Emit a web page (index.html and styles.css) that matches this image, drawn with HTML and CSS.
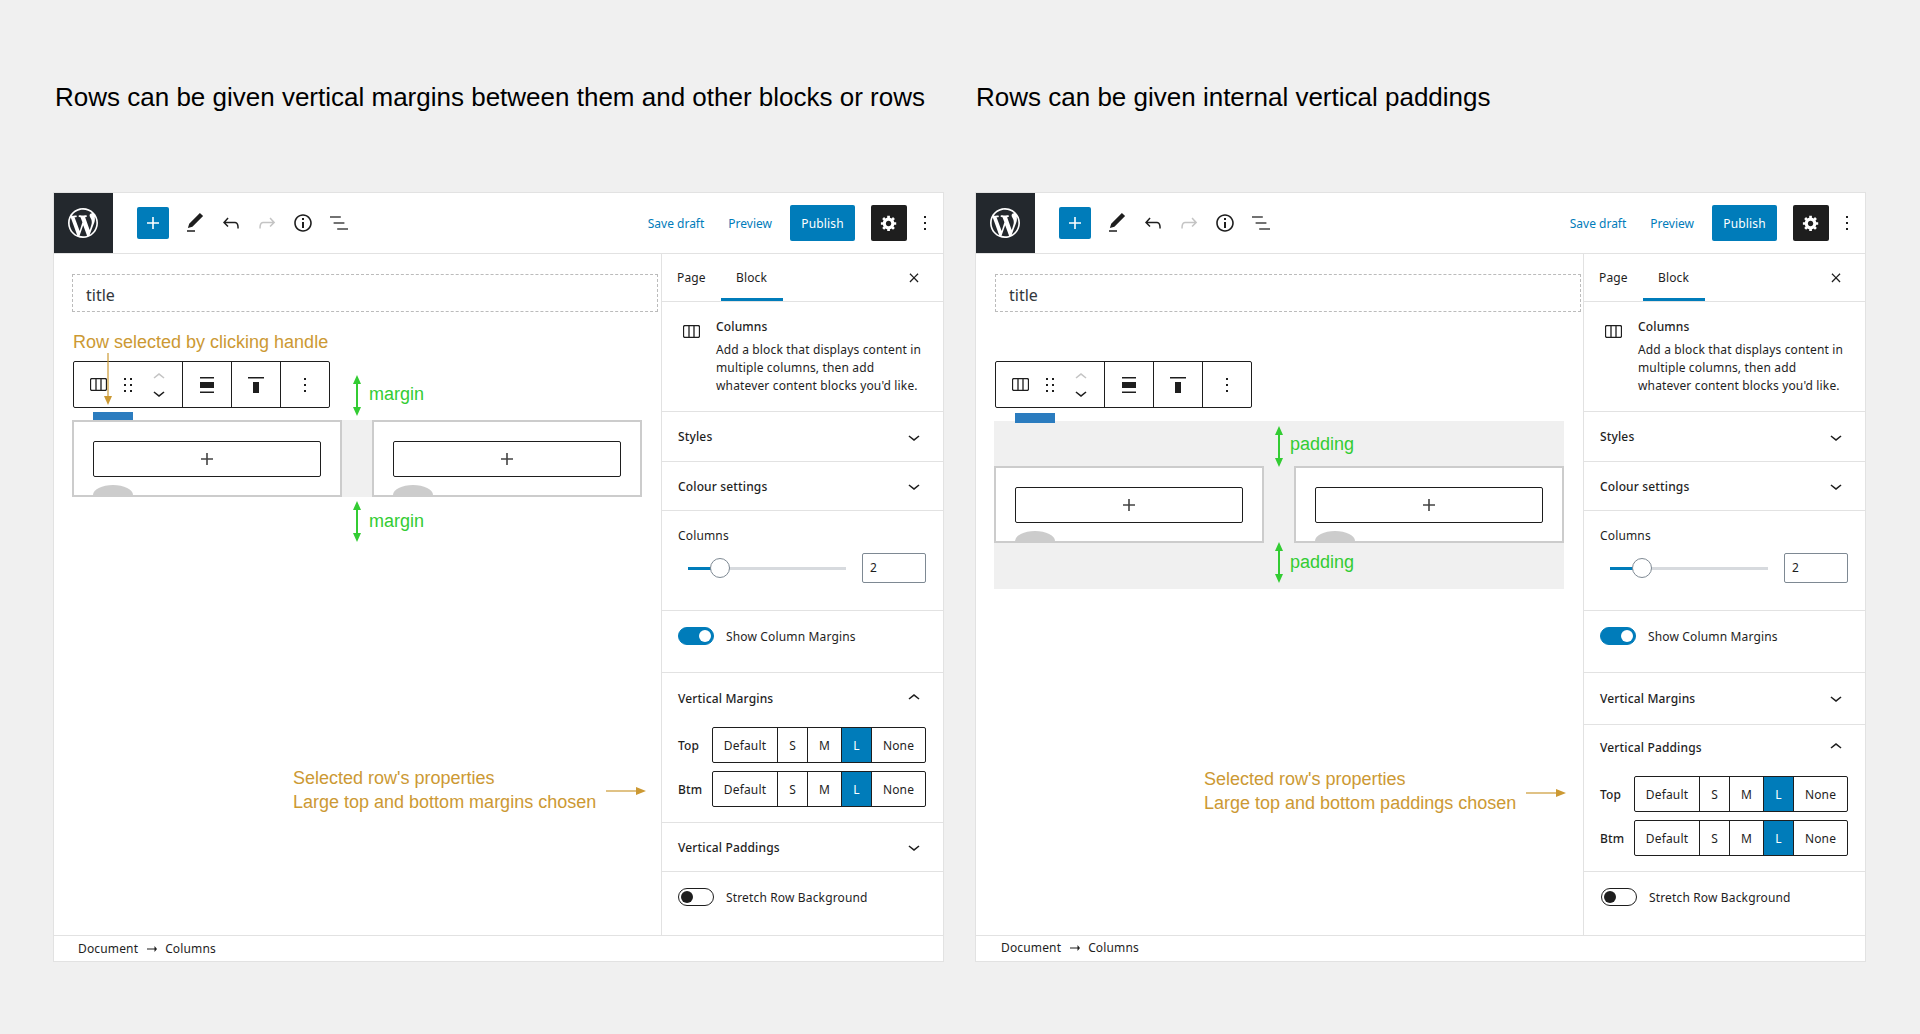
FILE: index.html
```html
<!DOCTYPE html>
<html lang="en">
<head>
    <meta charset="UTF-8">
    <meta name="viewport" content="width=device-width, initial-scale=1.0">
    <title>Row margins and paddings</title>
    <link rel="stylesheet" href="styles.css">
</head>
<body>
    <svg class="sprite" xmlns="http://www.w3.org/2000/svg">
        <symbol id="i-wp" viewBox="-2 -2 24 24"><path d="M20 10c0-5.51-4.49-10-10-10C4.48 0 0 4.49 0 10c0 5.52 4.48 10 10 10 5.51 0 10-4.48 10-10zM7.78 15.37L4.37 6.22c.55-.02 1.17-.08 1.17-.08.5-.06.44-1.13-.06-1.11 0 0-1.45.11-2.37.11-.18 0-.37 0-.58-.01C4.12 2.69 6.87 1.11 10 1.11c2.33 0 4.45.87 6.05 2.34-.68-.11-1.65.39-1.65 1.58 0 .74.45 1.36.9 2.1.35.61.55 1.36.55 2.46 0 1.49-1.4 5-1.4 5l-3.03-8.37c.54-.02.82-.17.82-.17.5-.05.44-1.25-.06-1.22 0 0-1.44.12-2.38.12-.87 0-2.33-.12-2.33-.12-.5-.03-.56 1.2-.06 1.22l.92.08 1.26 3.41zM17.41 10c.24-.64.74-1.87.43-4.25.7 1.29 1.05 2.71 1.05 4.25 0 3.29-1.73 6.24-4.4 7.78.97-2.59 1.94-5.2 2.92-7.78zM6.1 18.09C3.12 16.65 1.11 13.53 1.11 10c0-1.3.23-2.48.72-3.59C3.25 10.3 4.67 14.2 6.1 18.09zm4.03-6.63l2.58 6.98c-.86.29-1.76.45-2.71.45-.79 0-1.57-.11-2.29-.33.81-2.38 1.62-4.74 2.42-7.1z"/></symbol>
        <symbol id="i-plus" viewBox="0 0 24 24"><path d="M18 11.2h-5.2V6h-1.6v5.2H6v1.6h5.2V18h1.6v-5.2H18z"/></symbol>
        <symbol id="i-pen" viewBox="0 0 24 24"><path d="M20.1 5.1L16.9 2 6.2 12.7l-1.3 4.4 4.5-1.3L20.1 5.1zM4 20.8h8v-1.5H4v1.5z"/></symbol>
        <symbol id="i-undo" viewBox="0 0 24 24"><path d="M18.3 11.7c-.6-.6-1.4-.9-2.3-.9H6.7l2.9-3.3-1.1-1-4.5 5L8.5 16l1-1-2.7-2.7H16c.5 0 .9.2 1.3.5 1 1 1 3.4 1 4.5v.3h1.5v-.2c0-1.5 0-4.3-1.5-5.7z"/></symbol>
        <symbol id="i-redo" viewBox="0 0 24 24"><path d="M15.6 6.5l-1.1 1 2.9 3.3H8c-.9 0-1.7.3-2.3.9-1.4 1.5-1.4 4.2-1.4 5.6v.2h1.5v-.3c0-1.1 0-3.5 1-4.5.3-.3.7-.5 1.3-.5h9.2L14.5 15l1.1 1.1 4.6-4.6-4.6-5z"/></symbol>
        <symbol id="i-info" viewBox="0 0 24 24"><path d="M12 3.2c-4.8 0-8.8 3.9-8.8 8.8 0 4.8 3.9 8.8 8.8 8.8 4.8 0 8.8-3.9 8.8-8.8 0-4.8-4-8.8-8.8-8.8zm0 16c-4 0-7.2-3.3-7.2-7.2C4.8 8 8 4.8 12 4.8s7.2 3.3 7.2 7.2c0 4-3.2 7.2-7.2 7.2zM11 17h2v-6h-2v6zm0-8h2V7h-2v2z"/></symbol>
        <symbol id="i-list" viewBox="0 0 24 24"><path d="M13.8 5.2H3v1.5h10.8V5.2zm-3.6 12v1.5H21v-1.5H10.2zm7.2-6H6.6v1.5h10.8v-1.5z"/></symbol>
        <symbol id="i-gear" viewBox="0 0 20 20"><path d="M18 12h-2.18c-.17.7-.44 1.35-.81 1.93l1.54 1.54-2.1 2.1-1.54-1.54c-.58.36-1.23.63-1.91.79V19H8v-2.18c-.68-.16-1.33-.43-1.91-.79l-1.54 1.54-2.12-2.12 1.54-1.54c-.36-.58-.63-1.23-.79-1.91H1V9.03h2.17c.16-.7.44-1.35.8-1.94L2.43 5.55l2.1-2.1 1.54 1.54c.58-.37 1.24-.64 1.93-.81V2h3v2.18c.68.16 1.33.43 1.91.79l1.54-1.54 2.12 2.12-1.54 1.54c.36.59.64 1.24.8 1.94H18V12zm-8.5 1.5c1.66 0 3-1.34 3-3s-1.34-3-3-3-3 1.34-3 3 1.34 3 3 3z"/></symbol>
        <symbol id="i-more" viewBox="0 0 24 24"><path d="M13 19h-2v-2h2v2zm0-6h-2v-2h2v2zm0-6h-2V5h2v2z"/></symbol>
        <symbol id="i-close" viewBox="0 0 24 24"><path d="M13 11.800l4.400-4.400-1.100-1.100-4.300 4.400-4.300-4.400-1.100 1.100 4.400 4.400-4.400 4.400 1.100 1.100 4.300-4.400 4.300 4.400 1.100-1.100z"/></symbol>
        <symbol id="i-down" viewBox="0 0 24 24"><path d="M17.5 11.6L12 16l-5.5-4.4.9-1.2L12 14l4.5-3.6 1 1.2z"/></symbol>
        <symbol id="i-up" viewBox="0 0 24 24"><path d="M6.5 12.4L12 8l5.5 4.4-.9 1.2L12 10l-4.5 3.6-1-1.2z"/></symbol>
        <symbol id="i-cols" viewBox="0 0 17 13"><path d="M2 .5h13A1.5 1.5 0 0 1 16.500 2v9a1.500 1.500 0 0 1-1.500 1.500H2A1.500 1.500 0 0 1 .5 11V2A1.500 1.500 0 0 1 2 .5zM6 .5v12M11 .5v12" fill="none" stroke="currentColor" stroke-width="1.300"/></symbol>
        <symbol id="i-drag" viewBox="0 0 8 14"><path d="M0 0h2v2H0zM6 0h2v2H6zM0 6h2v2H0zM6 6h2v2H6zM0 12h2v2H0zM6 12h2v2H6z"/></symbol>
        <symbol id="i-wide" viewBox="0 0 14 16"><path d="M0 0h14v1.500H0zM0 5h14v6H0zM0 14.500h14V16H0z"/></symbol>
        <symbol id="i-top" viewBox="0 0 16 16"><path d="M0 0h16v1.500H0zM5 5h6v11H5z"/></symbol>
        <symbol id="i-arrow" viewBox="0 0 10 6"><path d="M0 2.500h7.500V0L10 3 7.500 6V3.500H0z"/></symbol>
        <symbol id="a-green" viewBox="0 0 8 41"><path d="M4 0l4 9H5v23h3l-4 9-4-9h3V9H0z"/></symbol>
        <symbol id="a-down" viewBox="0 0 8 52"><path d="M3 0h2v44H3z" opacity=".6"/><path d="M0 43h8l-4 9z"/></symbol>
        <symbol id="a-right" viewBox="0 0 40 8"><path d="M0 3h31v2H0z" opacity=".6"/><path d="M30 0v8l10-4z"/></symbol>
    </svg>

    <div class="page">
        <section class="panel">
            <h2 class="panel-title title-margins">Rows can be given vertical margins between them and other blocks or rows</h2>
            <div class="editor">
                <header class="topbar">
                    <div class="logo"><svg class="logo-icon"><use href="#i-wp"/></svg></div>
                    <button class="add-btn"><svg class="icon"><use href="#i-plus"/></svg></button>
                    <span class="tool first"><svg class="icon"><use href="#i-pen"/></svg></span>
                    <span class="tool"><svg class="icon"><use href="#i-undo"/></svg></span>
                    <span class="tool muted"><svg class="icon"><use href="#i-redo"/></svg></span>
                    <span class="tool"><svg class="icon"><use href="#i-info"/></svg></span>
                    <span class="tool dim"><svg class="icon"><use href="#i-list"/></svg></span>
                    <div class="actions">
                        <a class="link save">Save draft</a>
                        <a class="link preview">Preview</a>
                        <button class="publish">Publish</button>
                        <button class="gear"><svg class="gear-icon"><use href="#i-gear"/></svg></button>
                        <span class="more"><svg class="icon"><use href="#i-more"/></svg></span>
                    </div>
                </header>
                <div class="main">
                    <div class="canvas">
                        <div class="title-box">title</div>
                        <div class="toolbar">
                            <div class="tb-group tb-first">
                                <svg class="tb-cols"><use href="#i-cols"/></svg>
                                <svg class="tb-drag"><use href="#i-drag"/></svg>
                                <div class="tb-mover">
                                    <svg class="tb-chev muted"><use href="#i-up"/></svg>
                                    <svg class="tb-chev"><use href="#i-down"/></svg>
                                </div>
                            </div>
                            <div class="tb-group"><svg class="tb-wide"><use href="#i-wide"/></svg></div>
                            <div class="tb-group"><svg class="tb-top"><use href="#i-top"/></svg></div>
                            <div class="tb-group"><svg class="icon"><use href="#i-more"/></svg></div>
                        </div>
                        <div class="row">
                            <span class="handle"></span>
                            <div class="col"><div class="appender"><svg class="plus"><use href="#i-plus"/></svg></div><span class="col-tab"></span></div>
                            <div class="col"><div class="appender"><svg class="plus"><use href="#i-plus"/></svg></div><span class="col-tab"></span></div>
                        </div>

                        <span class="note note-row">Row selected by clicking handle</span>
                        <svg class="arrow-down"><use href="#a-down"/></svg>
                        <svg class="arrow-green am-top"><use href="#a-green"/></svg>
                        <span class="green-text tm-top">margin</span>
                        <svg class="arrow-green am-btm"><use href="#a-green"/></svg>
                        <span class="green-text tm-btm">margin</span>
                        <span class="note note-props">Selected row's properties<br>Large top and bottom margins chosen</span>
                        <svg class="arrow-right ar-left"><use href="#a-right"/></svg>
                    </div>
                    <aside class="sidebar">
                        <div class="tabs">
                            <span class="tab tab-page">Page</span>
                            <span class="tab tab-block">Block</span>
                            <svg class="close"><use href="#i-close"/></svg>
                        </div>
                        <div class="section s-desc">
                            <svg class="desc-icon"><use href="#i-cols"/></svg>
                            <div>
                                <div class="desc-title">Columns</div>
                                <p class="desc-text">Add a block that displays content in multiple columns, then add whatever content blocks you'd like.</p>
                            </div>
                        </div>
                        <div class="section s-styles"><div class="head"><span>Styles</span><svg class="icon"><use href="#i-down"/></svg></div></div>
                        <div class="section s-colour"><div class="head h-48"><span>Colour settings</span><svg class="icon"><use href="#i-down"/></svg></div></div>
                        <div class="section s-columns">
                            <div class="field-label">Columns</div>
                            <div class="range-row">
                                <div class="slider"><span class="slider-fill"></span><span class="slider-knob"></span></div>
                                <div class="num-input">2</div>
                            </div>
                        </div>
                        <div class="section s-toggle">
                            <div class="toggle-row"><span class="toggle on"></span><span>Show Column Margins</span></div>
                        </div>
                        <div class="section s-open-m">
                            <div class="head h-50"><span>Vertical Margins</span><svg class="icon"><use href="#i-up"/></svg></div>
                            <div class="seg-row seg-m">
                                <span class="seg-label">Top</span>
                                <div class="seg"><span class="c-def">Default</span><span class="c-s">S</span><span class="c-m">M</span><span class="c-l on">L</span><span class="c-none">None</span></div>
                            </div>
                            <div class="seg-row seg-next">
                                <span class="seg-label">Btm</span>
                                <div class="seg"><span class="c-def">Default</span><span class="c-s">S</span><span class="c-m">M</span><span class="c-l on">L</span><span class="c-none">None</span></div>
                            </div>
                        </div>
                        <div class="section s-closed-p"><div class="head h-48"><span>Vertical Paddings</span><svg class="icon"><use href="#i-down"/></svg></div></div>
                        <div class="section-last">
                            <div class="toggle-row"><span class="toggle"></span><span>Stretch Row Background</span></div>
                        </div>
                    </aside>
                </div>
                <footer class="status"><span>Document</span><svg class="status-arrow"><use href="#i-arrow"/></svg><span>Columns</span></footer>
            </div>
        </section>

        <section class="panel panel-paddings">
            <h2 class="panel-title title-paddings">Rows can be given internal vertical paddings</h2>
            <div class="editor">
                <header class="topbar">
                    <div class="logo"><svg class="logo-icon"><use href="#i-wp"/></svg></div>
                    <button class="add-btn"><svg class="icon"><use href="#i-plus"/></svg></button>
                    <span class="tool first"><svg class="icon"><use href="#i-pen"/></svg></span>
                    <span class="tool"><svg class="icon"><use href="#i-undo"/></svg></span>
                    <span class="tool muted"><svg class="icon"><use href="#i-redo"/></svg></span>
                    <span class="tool"><svg class="icon"><use href="#i-info"/></svg></span>
                    <span class="tool dim"><svg class="icon"><use href="#i-list"/></svg></span>
                    <div class="actions">
                        <a class="link save">Save draft</a>
                        <a class="link preview">Preview</a>
                        <button class="publish">Publish</button>
                        <button class="gear"><svg class="gear-icon"><use href="#i-gear"/></svg></button>
                        <span class="more"><svg class="icon"><use href="#i-more"/></svg></span>
                    </div>
                </header>
                <div class="main">
                    <div class="canvas">
                        <div class="title-box">title</div>
                        <div class="toolbar">
                            <div class="tb-group tb-first">
                                <svg class="tb-cols"><use href="#i-cols"/></svg>
                                <svg class="tb-drag"><use href="#i-drag"/></svg>
                                <div class="tb-mover">
                                    <svg class="tb-chev muted"><use href="#i-up"/></svg>
                                    <svg class="tb-chev"><use href="#i-down"/></svg>
                                </div>
                            </div>
                            <div class="tb-group"><svg class="tb-wide"><use href="#i-wide"/></svg></div>
                            <div class="tb-group"><svg class="tb-top"><use href="#i-top"/></svg></div>
                            <div class="tb-group"><svg class="icon"><use href="#i-more"/></svg></div>
                        </div>
                        <div class="row row-padded">
                            <span class="handle"></span>
                            <div class="col"><div class="appender"><svg class="plus"><use href="#i-plus"/></svg></div><span class="col-tab"></span></div>
                            <div class="col"><div class="appender"><svg class="plus"><use href="#i-plus"/></svg></div><span class="col-tab"></span></div>
                        </div>

                        <svg class="arrow-green ap-top"><use href="#a-green"/></svg>
                        <span class="green-text tp-top">padding</span>
                        <svg class="arrow-green ap-btm"><use href="#a-green"/></svg>
                        <span class="green-text tp-btm">padding</span>
                        <span class="note note-props-r">Selected row's properties<br>Large top and bottom paddings chosen</span>
                        <svg class="arrow-right ar-right"><use href="#a-right"/></svg>
                    </div>
                    <aside class="sidebar">
                        <div class="tabs">
                            <span class="tab tab-page">Page</span>
                            <span class="tab tab-block">Block</span>
                            <svg class="close"><use href="#i-close"/></svg>
                        </div>
                        <div class="section s-desc">
                            <svg class="desc-icon"><use href="#i-cols"/></svg>
                            <div>
                                <div class="desc-title">Columns</div>
                                <p class="desc-text">Add a block that displays content in multiple columns, then add whatever content blocks you'd like.</p>
                            </div>
                        </div>
                        <div class="section s-styles"><div class="head"><span>Styles</span><svg class="icon"><use href="#i-down"/></svg></div></div>
                        <div class="section s-colour"><div class="head h-48"><span>Colour settings</span><svg class="icon"><use href="#i-down"/></svg></div></div>
                        <div class="section s-columns">
                            <div class="field-label">Columns</div>
                            <div class="range-row">
                                <div class="slider"><span class="slider-fill"></span><span class="slider-knob"></span></div>
                                <div class="num-input">2</div>
                            </div>
                        </div>
                        <div class="section s-toggle">
                            <div class="toggle-row"><span class="toggle on"></span><span>Show Column Margins</span></div>
                        </div>
                        <div class="section s-closed-m"><div class="head h-50"><span>Vertical Margins</span><svg class="icon"><use href="#i-down"/></svg></div></div>
                        <div class="section s-open-p">
                            <div class="head h-44"><span>Vertical Paddings</span><svg class="icon"><use href="#i-up"/></svg></div>
                            <div class="seg-row seg-p">
                                <span class="seg-label">Top</span>
                                <div class="seg"><span class="c-def">Default</span><span class="c-s">S</span><span class="c-m">M</span><span class="c-l on">L</span><span class="c-none">None</span></div>
                            </div>
                            <div class="seg-row seg-next">
                                <span class="seg-label">Btm</span>
                                <div class="seg"><span class="c-def">Default</span><span class="c-s">S</span><span class="c-m">M</span><span class="c-l on">L</span><span class="c-none">None</span></div>
                            </div>
                        </div>
                        <div class="section-last last-shifted">
                            <div class="toggle-row"><span class="toggle"></span><span>Stretch Row Background</span></div>
                        </div>
                    </aside>
                </div>
                <footer class="status status-up"><span>Document</span><svg class="status-arrow"><use href="#i-arrow"/></svg><span>Columns</span></footer>
            </div>
        </section>
    </div>
</body>
</html>
```

FILE: styles.css
```css
* {
    box-sizing: border-box;
}
body {
    margin: 0;
    background-color: #f0f0f0;
    color: #1e1e1e;
    font-family: "Noto Sans", sans-serif;
    font-size: 12px;
    letter-spacing: 0.15px;
}
.sprite {
    display: none;
}
.page {
    display: flex;
    gap: 31px;
    padding: 82px 0 0 53px;
}
.panel {
    width: 891px;
}
.panel-title {
    height: 30px;
    margin: 0 0 80px;
    font-family: "Liberation Sans", Arial, sans-serif;
    font-size: 26px;
    font-weight: normal;
    line-height: 30px;
    letter-spacing: normal;
    color: #000;
    white-space: nowrap;
}
.title-margins {
    padding-left: 2px;
}
.title-paddings {
    padding-left: 1px;
}

/* editor window */
.editor {
    display: flex;
    flex-direction: column;
    height: 770px;
    background-color: #fff;
    border: 1px solid #e2e2e2;
}
.icon {
    display: block;
    width: 24px;
    height: 24px;
    flex: none;
    fill: currentColor;
}
.topbar {
    display: flex;
    align-items: center;
    flex: none;
    height: 61px;
    border-bottom: 1px solid #e2e2e2;
}
.logo {
    display: flex;
    align-items: center;
    justify-content: center;
    width: 59px;
    height: 60px;
    padding-right: 1px;
    background-color: #23282d;
}
.logo-icon {
    width: 36px;
    height: 36px;
    fill: #fff;
}
.add-btn {
    display: flex;
    align-items: center;
    justify-content: center;
    width: 32px;
    height: 32px;
    margin-left: 24px;
    padding: 0;
    background-color: #007cba;
    border: none;
    border-radius: 2px;
    color: #fff;
}
.tool {
    display: flex;
    justify-content: center;
    width: 36px;
}
.tool.first {
    margin-left: 8px;
}
.muted {
    color: #c4c4c4;
}
.dim {
    color: #444;
}
.actions {
    display: flex;
    align-items: center;
    margin-left: auto;
    padding-right: 6px;
}
.link {
    color: #007cba;
    letter-spacing: normal;
}
.save {
    margin-right: 24px;
}
.preview {
    margin-right: 18px;
}
.publish {
    width: 65px;
    height: 36px;
    padding: 0;
    background-color: #007cba;
    border: none;
    border-radius: 2px;
    color: #fff;
    font-family: inherit;
    font-size: 12px;
    letter-spacing: inherit;
}
.gear {
    display: flex;
    align-items: center;
    justify-content: center;
    width: 36px;
    height: 36px;
    margin-left: 16px;
    padding: 0;
    background-color: #1e1e1e;
    border: none;
    border-radius: 2px;
}
.gear-icon {
    width: 18px;
    height: 18px;
    fill: #fff;
}
.more {
    margin-left: 6px;
}
.main {
    display: flex;
    flex: 1;
    min-height: 0;
}

/* canvas */
.canvas {
    position: relative;
    flex: 1;
    padding: 20px 0 0 18px;
}
.title-box {
    width: 586px;
    height: 38px;
    padding-left: 13px;
    border: 1px dashed #bbb;
    font-size: 16px;
    line-height: 40px;
    letter-spacing: normal;
    color: #32373c;
}
.panel-paddings .title-box {
    margin-left: 1px;
}
.toolbar {
    display: flex;
    width: 257px;
    height: 47px;
    margin: 49px 0 0 1px;
    background-color: #fff;
    border: 1px solid #1e1e1e;
    border-radius: 2px;
}
.tb-group {
    display: flex;
    align-items: center;
    justify-content: center;
    width: 49px;
    border-left: 1px solid #1e1e1e;
}
.tb-first {
    justify-content: flex-start;
    width: 108px;
    padding-left: 16px;
    border-left: none;
}
.tb-cols {
    width: 17px;
    height: 13px;
    flex: none;
}
.tb-drag {
    width: 8px;
    height: 14px;
    flex: none;
    margin-left: 17px;
    fill: #1e1e1e;
}
.tb-mover {
    display: flex;
    flex-direction: column;
    flex: none;
    width: 24px;
    margin-left: 15px;
}
.tb-chev {
    display: block;
    width: 24px;
    height: 24px;
    fill: currentColor;
}
.tb-chev.muted {
    margin-bottom: -8px;
}
.tb-wide {
    width: 14px;
    height: 16px;
    fill: #1e1e1e;
}
.tb-top {
    width: 16px;
    height: 16px;
    fill: #1e1e1e;
}
.row {
    position: relative;
    display: flex;
    gap: 30px;
    width: 570px;
    margin-top: 12px;
    background-color: #f0f0f0;
}
.row-padded {
    margin-top: 13px;
    padding: 45px 0 46px;
}
.handle {
    position: absolute;
    left: 21px;
    top: -8px;
    width: 40px;
    height: 10px;
    background-color: #2b7cbf;
}
.col {
    position: relative;
    width: 270px;
    height: 77px;
    padding: 19px;
    background-color: #fff;
    border: 2px solid #ccc;
}
.appender {
    display: flex;
    align-items: center;
    justify-content: center;
    height: 36px;
    border: 1px solid #1e1e1e;
    border-radius: 2px;
}
.plus {
    width: 24px;
    height: 24px;
    fill: #444;
}
.col-tab {
    position: absolute;
    left: 19px;
    bottom: 0;
    width: 40px;
    height: 10px;
    background-color: #ccc;
    border-radius: 50% 50% 0 0 / 100% 100% 0 0;
}

/* annotations on top of the canvas */
.note,
.green-text {
    position: absolute;
    font-family: "Liberation Sans", Arial, sans-serif;
    font-size: 18px;
    line-height: 24px;
    letter-spacing: normal;
    white-space: nowrap;
}
.note {
    color: #cc9933;
}
.green-text {
    color: #33cc33;
}
.note-row {
    left: 19px;
    top: 76px;
}
.note-props {
    left: 239px;
    top: 512px;
}
.note-props-r {
    left: 228px;
    top: 513px;
}
.arrow-down {
    position: absolute;
    left: 50px;
    top: 99px;
    width: 8px;
    height: 52px;
    fill: #cc9933;
}
.arrow-right {
    position: absolute;
    width: 40px;
    height: 8px;
    fill: #cc9933;
}
.ar-left {
    left: 552px;
    top: 533px;
}
.ar-right {
    left: 550px;
    top: 535px;
}
.arrow-green {
    position: absolute;
    width: 8px;
    height: 41px;
    fill: #33cc33;
}
.am-top {
    left: 299px;
    top: 121px;
}
.am-btm {
    left: 299px;
    top: 247px;
}
.tm-top {
    left: 315px;
    top: 128px;
}
.tm-btm {
    left: 315px;
    top: 255px;
}
.ap-top {
    left: 299px;
    top: 172px;
}
.ap-btm {
    left: 299px;
    top: 288px;
}
.tp-top {
    left: 314px;
    top: 178px;
}
.tp-btm {
    left: 314px;
    top: 296px;
}

/* sidebar */
.sidebar {
    display: flex;
    flex-direction: column;
    flex: none;
    width: 282px;
    border-left: 1px solid #e2e2e2;
}
.tabs {
    display: flex;
    flex: none;
    align-items: center;
    height: 48px;
    border-bottom: 1px solid #e2e2e2;
}
.tab {
    display: flex;
    align-items: center;
    height: 47px;
    padding-left: 15px;
}
.tab-page {
    width: 59px;
}
.tab-block {
    width: 62px;
    border-bottom: 3px solid #007cba;
    padding-top: 3px;
}
.close {
    width: 20px;
    height: 20px;
    margin-left: auto;
    margin-right: 19px;
    fill: #1e1e1e;
}
.section {
    flex: none;
    border-bottom: 1px solid #e2e2e2;
}
.s-desc {
    display: flex;
    height: 110px;
    padding: 17px 15px 0 21px;
}
.desc-icon {
    flex: none;
    width: 17px;
    height: 13px;
    margin: 6px 16px 0 0;
}
.desc-title {
    line-height: 16px;
    font-weight: 500;
}
.desc-text {
    margin: 6px 0 0;
    line-height: 18px;
}
.s-styles {
    height: 50px;
}
.s-colour {
    height: 49px;
}
.s-columns {
    height: 100px;
    padding: 17px 17px 0 16px;
}
.s-toggle {
    height: 62px;
    padding: 16px 0 0 16px;
}
.s-open-m {
    height: 150px;
}
.s-closed-p {
    height: 49px;
}
.s-closed-m {
    height: 52px;
}
.s-open-p {
    height: 147px;
}
.section-last {
    flex: 1;
    padding: 16px 0 0 16px;
}
.last-shifted {
    padding-left: 17px;
}
.head {
    display: flex;
    align-items: center;
    justify-content: space-between;
    height: 49px;
    padding: 0 17px 0 16px;
    font-weight: 500;
}
.h-48 {
    height: 48px;
}
.h-50 {
    height: 50px;
}
.h-44 {
    height: 44px;
}
.field-label {
    line-height: 16px;
}
.range-row {
    display: flex;
    align-items: center;
    margin-top: 9px;
    padding-left: 10px;
}
.slider {
    position: relative;
    width: 158px;
    height: 3px;
    margin-right: 16px;
    background-color: #d7dade;
}
.slider-fill {
    position: absolute;
    left: 0;
    top: 0;
    width: 26px;
    height: 3px;
    background-color: #007cba;
}
.slider-knob {
    position: absolute;
    left: 22px;
    top: -9px;
    width: 20px;
    height: 20px;
    background-color: #fff;
    border: 1px solid #7e8993;
    border-radius: 50%;
}
.num-input {
    width: 64px;
    height: 30px;
    padding-left: 7px;
    border: 1px solid #7e8993;
    border-radius: 2px;
    line-height: 28px;
}
.toggle-row {
    display: flex;
    align-items: center;
    gap: 12px;
}
.toggle {
    display: flex;
    align-items: center;
    width: 36px;
    height: 18px;
    padding: 0 2px;
    border: 1px solid #1e1e1e;
    border-radius: 9px;
}
.toggle::after {
    content: "";
    width: 12px;
    height: 12px;
    background-color: #1e1e1e;
    border-radius: 50%;
}
.toggle.on {
    justify-content: flex-end;
    background-color: #007cba;
    border-color: #007cba;
}
.toggle.on::after {
    background-color: #fff;
}
.seg-row {
    display: flex;
    align-items: center;
    padding-left: 16px;
}
.seg-m {
    margin-top: 4px;
}
.seg-p {
    margin-top: 7px;
}
.seg-next {
    margin-top: 8px;
}
.seg-label {
    width: 34px;
    font-weight: 500;
}
.seg {
    display: flex;
    width: 214px;
    height: 36px;
    border: 1px solid #1e1e1e;
    border-radius: 2px;
}
.seg span {
    display: flex;
    align-items: center;
    justify-content: center;
    border-right: 1px solid #1e1e1e;
}
.seg .c-def {
    width: 65px;
}
.seg .c-s {
    width: 30px;
}
.seg .c-m {
    width: 34px;
}
.seg .c-l {
    width: 30px;
}
.seg .c-none {
    width: 53px;
    border-right: none;
}
.seg .on {
    background-color: #007cba;
    color: #fff;
}
.status {
    display: flex;
    flex: none;
    align-items: center;
    height: 26px;
    padding-left: 24px;
    border-top: 1px solid #e2e2e2;
}
.status-up {
    padding-bottom: 2px;
    padding-left: 25px;
}
.status-arrow {
    width: 10px;
    height: 6px;
    margin: 0 8px 0 9px;
    fill: #1e1e1e;
}
```
